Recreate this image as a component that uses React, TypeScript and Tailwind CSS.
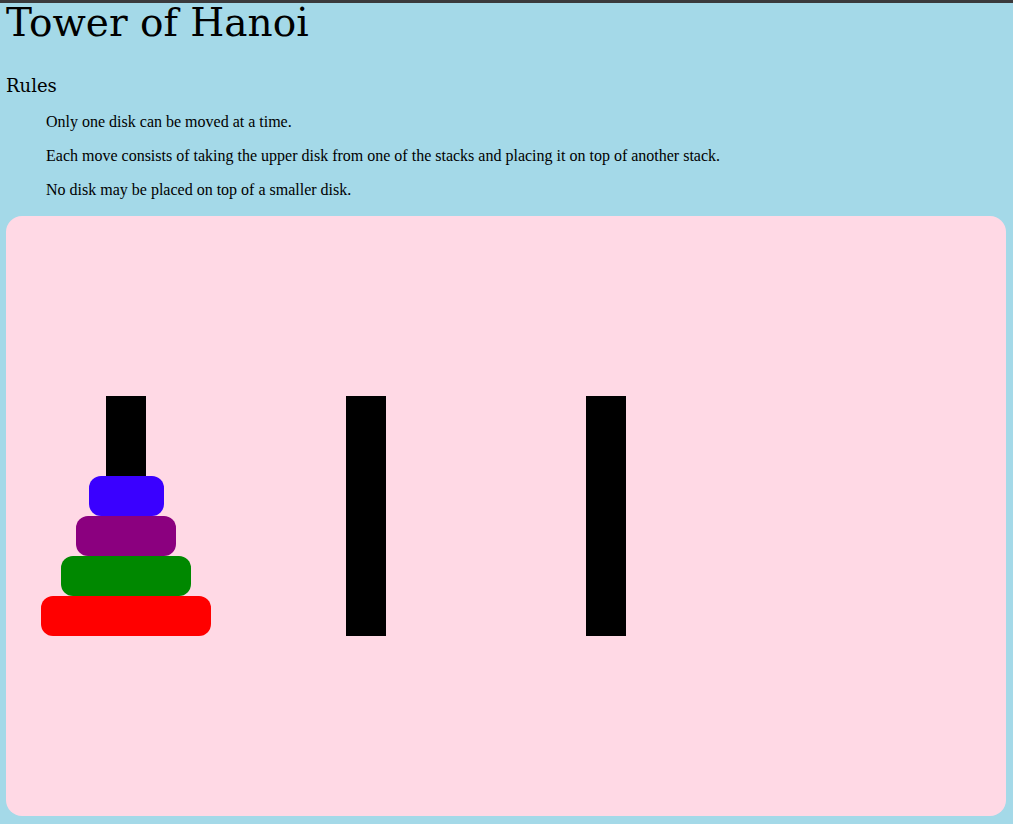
import React from "react";

const disks = [
  { w: 75, c: "bg-[#3a00ff]" },
  { w: 100, c: "bg-[#8b007f]" },
  { w: 130, c: "bg-[#008800]" },
  { w: 170, c: "bg-[#ff0000]" },
];

function Tower({ withDisks }: { withDisks?: boolean }) {
  return (
    <div className="w-[240px] flex justify-center">
      <div className="relative w-[40px] h-[240px] bg-black">
        {withDisks && (
          <div className="absolute bottom-0 left-1/2 -translate-x-1/2 flex flex-col items-center">
            {disks.map((d, i) => (
              <div
                key={i}
                className={`h-[40px] rounded-[12px] ${d.c}`}
                style={{ width: d.w }}
              />
            ))}
          </div>
        )}
      </div>
    </div>
  );
}

export default function App() {
  return (
    <div className="min-h-[824px] w-[1013px] bg-[#a4d9e8] overflow-hidden">
      <div className="h-[3px] bg-[#3a3a3c]" />
      <div className="px-[6px]">
        <h1
          className="text-[39px] leading-[40px] m-0 text-black"
          style={{ fontFamily: '"DejaVu Serif", serif' }}
        >
          Tower of Hanoi
        </h1>
        <h2
          className="mt-[31px] text-[18px] leading-[24px] text-black"
          style={{ fontFamily: '"DejaVu Serif", serif' }}
        >
          Rules
        </h2>
        <ul
          className="pl-[40px] mt-[15px] text-[16px] leading-[18px] text-black flex flex-col gap-[16px]"
          style={{ fontFamily: '"Liberation Serif", serif' }}
        >
          <li>Only one disk can be moved at a time.</li>
          <li>
            Each move consists of taking the upper disk from one of the stacks
            and placing it on top of another stack.
          </li>
          <li>No disk may be placed on top of a smaller disk.</li>
        </ul>
        <div className="mt-[17px] w-[1000px] h-[600px] rounded-[16px] bg-[#ffd9e5] pt-[180px] flex items-start">
          <Tower withDisks />
          <Tower />
          <Tower />
        </div>
      </div>
    </div>
  );
}
